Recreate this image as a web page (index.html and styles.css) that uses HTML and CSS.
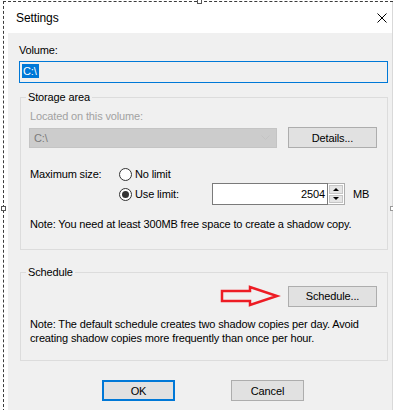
FILE: index.html
```html
<html lang="en">
  <head>
    <meta charset="utf-8">
    <title>Settings</title>
    <link rel="stylesheet" href="styles.css">
  </head>
  <body>
    <div class="frame">
      <span class="handle hTop"></span>
      <span class="handle hLeft"></span>
      <span class="handle hRight"></span>

      <div class="window">
        <div class="titlebar">
          <span class="title">Settings</span>
          <svg class="close" width="10" height="10" viewBox="0 0 10 10">
            <path d="M0.5 0.5 L9.5 9.5 M9.5 0.5 L0.5 9.5" stroke="#000" stroke-width="1" fill="none"/>
          </svg>
        </div>

        <div class="client">
          <div class="line">Volume:</div>
          <div class="volume"><span class="sel">C:\</span></div>

          <fieldset class="group gStorage">
            <legend>Storage area</legend>
            <div class="line disabled">Located on this volume:</div>
            <div class="row rVolume">
              <div class="combo">
                <span>C:\</span>
                <svg width="9" height="5" viewBox="0 0 9 5">
                  <path d="M0.5 0.5 L4.5 4.5 L8.5 0.5" stroke="#c4c4c4" stroke-width="1" fill="none"/>
                </svg>
              </div>
              <button class="btn" type="button">Details...</button>
            </div>

            <div class="maxsize">
              <div class="mLabel">Maximum size:</div>
              <div class="mOptions">
                <div class="opt optNo">
                  <span class="radio"></span>No limit
                </div>
                <div class="opt optUse">
                  <span class="radio on"></span><span class="useText">Use limit:</span>
                  <div class="spin">
                    <div class="spinValue">2504</div>
                    <div class="spinBtns">
                      <span class="sb"><i class="up"></i></span>
                      <span class="sb"><i class="down"></i></span>
                    </div>
                  </div>
                  <span class="unit">MB</span>
                </div>
              </div>
            </div>

            <div class="line note1">Note: You need at least 300MB free space to create a shadow copy.</div>
          </fieldset>

          <fieldset class="group gSchedule">
            <legend>Schedule</legend>
            <div class="row rSchedule">
              <svg class="arrow" width="62" height="22" viewBox="0 0 62 22">
                <polygon points="3,6 31,6 31,2 58,11 31,20 31,16 3,16" fill="none" stroke="#ed1c24" stroke-width="2.5" stroke-linejoin="miter"/>
              </svg>
              <button class="btn" type="button">Schedule...</button>
            </div>
            <div class="note2">Note: The default schedule creates two shadow copies per day. Avoid<br>creating shadow copies more frequently than once per hour.</div>
          </fieldset>

          <div class="actions">
            <button class="btn bOk" type="button">OK</button>
            <button class="btn" type="button">Cancel</button>
          </div>
        </div>
      </div>
    </div>
  </body>
</html>
```
FILE: styles.css
```css
html, body   {  margin: 0;  overflow: hidden;  background: #fff;  }
body         {  font-family: "Liberation Sans", Arial, sans-serif;  font-size: 11px;  letter-spacing: -0.14px;  color: #000;  }

.frame       {  position: relative;  margin: 1px 0 0 3px;  height: 410px;  border-top: 1px dashed #3c3c3c;  border-left: 1px dashed #3c3c3c;  }
.handle      {  position: absolute;  width: 3px;  height: 3px;  background: #fff;  border: 1px solid #555;  }
.hTop        {  left: 193px;  top: -3px;  }
.hLeft       {  left: -3px;  top: 204px;  }
.hRight      {  left: 386px;  top: 204px;  border-color: #999;  }

.window      {  display: flex;  flex-direction: column;  height: 408px;  width: 388px;  border-right: 1px solid #d9d9d9;  }
.titlebar    {  height: 31px;  flex: none;  display: flex;  align-items: center;  justify-content: space-between;  padding: 0 5px 0 12px;  font-size: 12px;  letter-spacing: -0.1px;  }
.close       {  display: block;  }
.client      {  flex: 1;  margin-left: 4px;  background: #f0f0f0;  padding: 11px 4px 0 11px;  }

.line        {  line-height: 13px;  white-space: nowrap;  }
.disabled    {  color: #a2a2a2;  }

.volume      {  margin-top: 4px;  border: 1px solid #0078d7;  padding: 2px 0 0 2px;  box-sizing: border-box;  height: 22px;  }
.sel         {  display: inline-block;  background: #0078d7;  color: #fff;  line-height: 14px;  padding: 0 2px 0 1px;  }

.group       {  margin: 0 0 0 1px;  border: 1px solid #dcdcdc;  padding: 0 10px 0 9px;  min-width: 0;  }
.group legend {  padding: 0 2px;  margin-left: -4px;  line-height: 13px;  }
.gStorage    {  margin-top: 8px;  padding-top: 6px;  padding-bottom: 18px;  }
.gSchedule   {  margin-top: 16px;  padding-top: 6px;  padding-bottom: 15px;  }

.row         {  display: flex;  align-items: center;  }
.rVolume     {  margin-top: 4px;  justify-content: space-between;  }
.combo       {  margin-left: -1px;  width: 248px;  height: 20px;  box-sizing: border-box;  background: #cccccc;  border: 1px solid #c4c4c4;  color: #7a7a7a;  display: flex;  align-items: center;  justify-content: space-between;  padding: 0 6px 0 4px;  }
.combo svg   {  display: block;  }

.btn         {  font: inherit;  letter-spacing: inherit;  color: #000;  background: #e1e1e1;  border: 1px solid #adadad;  width: 89px;  height: 21px;  padding: 0;  }
.bOk         {  border: 2px solid #0078d7;  }

.maxsize     {  display: flex;  margin-top: 19px;  }
.mLabel      {  width: 89px;  line-height: 14px;  }
.mOptions    {  display: flex;  flex-direction: column;  gap: 2px;  }
.opt         {  display: flex;  align-items: center;  white-space: nowrap;  }
.optNo       {  height: 14px;  }
.optUse      {  height: 22px;  }
.radio       {  width: 11px;  height: 11px;  border: 1px solid #333;  border-radius: 50%;  background: #fff;  margin-right: 3px;  position: relative;  }
.radio.on::after {  content: "";  position: absolute;  left: 2px;  top: 2px;  width: 7px;  height: 7px;  border-radius: 50%;  background: #333;  }
.useText     {  width: 77px;  }

.spin        {  display: flex;  height: 22px;  }
.spinValue   {  width: 116px;  box-sizing: border-box;  border: 1px solid #7a7a7a;  background: #fff;  text-align: right;  padding: 3px 2px 0 0;  line-height: 14px;  }
.spinBtns    {  display: flex;  flex-direction: column;  width: 17px;  box-sizing: border-box;  border: 1px solid #adadad;  border-left: 0;  background: #fff;  padding: 1px;  gap: 1px;  }
.sb          {  flex: 1;  background: #e5e5e5;  border: 1px solid #c6c6c6;  display: flex;  align-items: center;  justify-content: center;  }
.sb i        {  width: 0;  height: 0;  border-left: 3px solid transparent;  border-right: 3px solid transparent;  }
.sb .up      {  border-bottom: 3px solid #000;  }
.sb .down    {  border-top: 3px solid #000;  }
.unit        {  margin-left: 8px;  }

.note1       {  margin-top: 13px;  }

.rSchedule   {  justify-content: flex-end;  }
.arrow       {  display: block;  margin-right: 7px;  }
.note2       {  margin-top: 10px;  line-height: 14px;  white-space: nowrap;  }

.actions     {  display: flex;  gap: 56px;  margin-top: 19px;  padding-left: 83px;  }
.actions .btn {  width: 73px;  height: 21px;  }
```
